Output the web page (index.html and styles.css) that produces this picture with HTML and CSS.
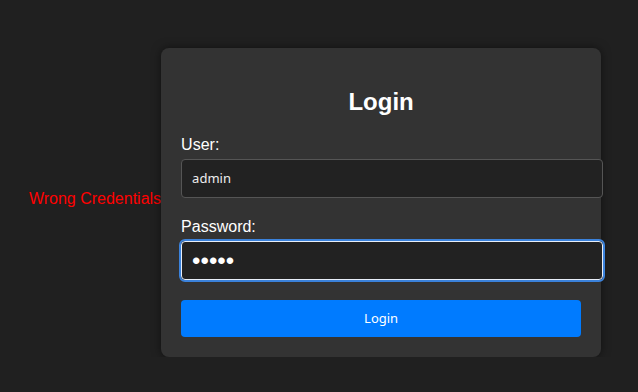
FILE: index.html
```html
<!DOCTYPE html>
<html lang="en">
<head>
    <meta charset="UTF-8">
    <meta name="viewport" content="width=device-width, initial-scale=1.0">
    <title>Login</title>
    <link rel="stylesheet" href="styles.css">
</head>
<body>
    <div class="wrapper">
        <p class="error">Wrong Credentials</p>

        <form class="login-box">
            <h2 class="title">Login</h2>

            <label for="user">User:</label>
            <input type="text" id="user" value="admin">

            <label for="pass">Password:</label>
            <input type="password" id="pass" class="focused" value="12345">

            <button type="button" class="btn">Login</button>
        </form>
    </div>
</body>
</html>
```

FILE: styles.css
```css
body {
    margin: 8px;
    background-color: #202020;
    color: #fff;
    font-family: "Liberation Sans", Arial, sans-serif;
}

.wrapper {
    display: flex;
    align-items: center;
    justify-content: center;
    padding-top: 40px;
}

/* 错误提示 */
.error {
    color: #ff0000;
    font-size: 16px;
    margin: 0 0 7px 0;
    position: relative;
    left: -4px;
}

/* 登录卡片 */
.login-box {
    width: 400px;
    padding: 20px;
    background-color: #333;
    border-radius: 8px;
    box-shadow: 0 0 10px rgba(0, 0, 0, 0.5);
    position: relative;
    left: -4px;
}

.title {
    font-size: 24px;
    text-align: center;
    margin: 20px 0;
}

label {
    display: block;
    font-size: 16px;
    margin-bottom: 5px;
}

input,
.btn {
    font-family: "Noto Sans", "Open Sans", sans-serif;
    font-size: 13px;
}

input {
    display: block;
    width: 100%;
    height: 17px;
    padding: 10px;
    margin-bottom: 20px;
    line-height: 17px;
    background-color: #222;
    color: #eee;
    border: 1px solid #555;
    border-radius: 4px;
}

input[type="password"] {
    font-family: "Liberation Sans", Arial, sans-serif;
    font-size: 24px;
    color: #fff;
}

input.focused {
    border-color: #e8eef8;
    outline: 2px solid #3b82db;
    outline-offset: 0;
}

/* 按钮 */
.btn {
    display: block;
    width: 100%;
    margin-top: 1px;
    padding: 10px;
    line-height: 17px;
    background-color: #007bff;
    color: #fff;
    border: none;
    border-radius: 4px;
    cursor: pointer;
}
```
